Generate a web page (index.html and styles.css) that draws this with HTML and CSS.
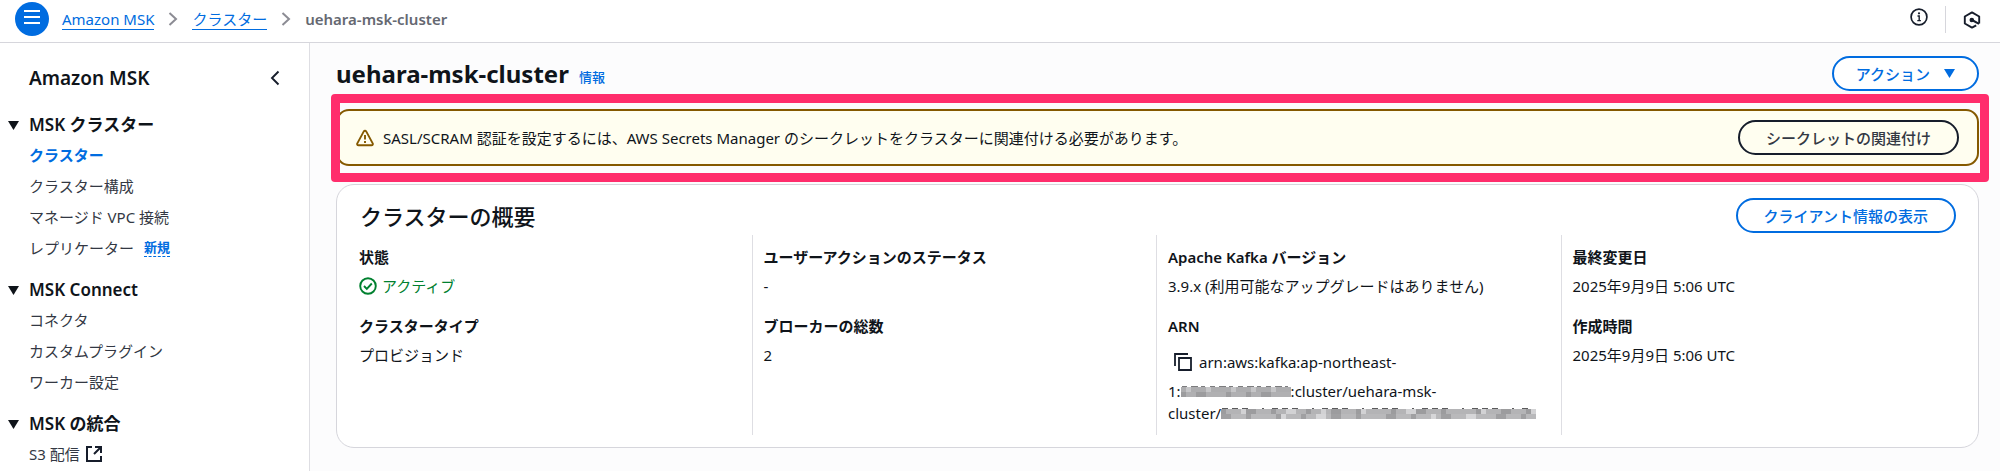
FILE: index.html
```html
<!DOCTYPE html>
<html lang="ja">
<head>
<meta charset="utf-8">
<meta name="viewport" content="width=device-width, initial-scale=1">
<title>uehara-msk-cluster</title>
<link rel="stylesheet" href="styles.css">
</head>
<body>
<header class="topbar">
  <button class="menu-button" type="button" aria-label="メニュー">
    <svg width="18" height="18" viewBox="0 0 18 18"><path d="M1 3h16M1 9h16M1 15h16" stroke="#fff" stroke-width="2" fill="none"/></svg>
  </button>
  <nav class="breadcrumbs" aria-label="パンくず">
    <a class="crumb-link" href="#">Amazon MSK</a>
    <svg class="crumb-sep" width="10" height="14" viewBox="0 0 10 14"><path d="M1.500 1l6.500 6-6.500 6" fill="none" stroke="#8c8c94" stroke-width="2"/></svg>
    <a class="crumb-link" href="#">クラスター</a>
    <svg class="crumb-sep" width="10" height="14" viewBox="0 0 10 14"><path d="M1.500 1l6.500 6-6.500 6" fill="none" stroke="#8c8c94" stroke-width="2"/></svg>
    <span class="crumb-current">uehara-msk-cluster</span>
  </nav>
  <div class="tools">
    <button class="icon-button info-button" type="button" aria-label="情報">
      <svg width="18" height="18" viewBox="0 0 18 18"><circle cx="9" cy="9" r="7.900" fill="none" stroke="#161d2b" stroke-width="1.700"/><path d="M7.500 8h1.700v4.600M7.300 12.600h3.600" fill="none" stroke="#161d2b" stroke-width="1.400"/><circle cx="9" cy="5.300" r="1.100" fill="#161d2b"/></svg>
    </button>
    <button class="icon-button hex-button" type="button" aria-label="ツール">
      <svg width="18" height="18" viewBox="0 0 18 18"><path d="M16.200 12.500v-7L9 1.400 1.800 5.500v7L9 16.600l4.200-2.300" fill="none" stroke="#161d2b" stroke-width="1.900" stroke-linejoin="round"/><path d="M9 9l7 3.800" stroke="#161d2b" stroke-width="2"/><circle cx="8.800" cy="9" r="2.300" fill="#161d2b"/></svg>
    </button>
  </div>
</header>
<div class="layout">
  <aside class="sidebar">
    <div class="side-head">
      <h2 class="side-title">Amazon MSK</h2>
      <button class="icon-button" type="button" aria-label="閉じる">
        <svg width="10" height="16" viewBox="0 0 10 16"><path d="M8.500 1.500L2 8l6.500 6.500" fill="none" stroke="#161d2b" stroke-width="1.900"/></svg>
      </button>
    </div>
    <section class="side-group">
      <h3 class="side-section"><svg class="caret" viewBox="0 0 11 9"><path d="M0 0h11L5.500 9z"/></svg>MSK クラスター</h3>
      <ul class="side-list">
        <li><a class="side-link active" href="#">クラスター</a></li>
        <li><a class="side-link" href="#">クラスター構成</a></li>
        <li><a class="side-link" href="#">マネージド VPC 接続</a></li>
        <li><a class="side-link" href="#">レプリケーター</a><button class="new-badge" type="button">新規</button></li>
      </ul>
    </section>
    <section class="side-group">
      <h3 class="side-section"><svg class="caret" viewBox="0 0 11 9"><path d="M0 0h11L5.500 9z"/></svg>MSK Connect</h3>
      <ul class="side-list">
        <li><a class="side-link" href="#">コネクタ</a></li>
        <li><a class="side-link" href="#">カスタムプラグイン</a></li>
        <li><a class="side-link" href="#">ワーカー設定</a></li>
      </ul>
    </section>
    <section class="side-group">
      <h3 class="side-section"><svg class="caret" viewBox="0 0 11 9"><path d="M0 0h11L5.500 9z"/></svg>MSK の統合</h3>
      <ul class="side-list">
        <li><a class="side-link external" href="#">S3 配信
          <svg width="16" height="16" viewBox="0 0 16 16"><path d="M6 1H1v14h14v-5M9 1h6v6M15 1L8 8" fill="none" stroke="#161d2b" stroke-width="2"/></svg></a></li>
      </ul>
    </section>
  </aside>
  <main class="content">
    <div class="page-head">
      <h1 class="page-title">uehara-msk-cluster</h1>
      <a class="info-link" href="#">情報</a>
      <button class="btn action-btn" type="button">アクション<svg class="caret" viewBox="0 0 11 9"><path d="M0 0h11L5.500 9z"/></svg></button>
    </div>
    <div class="highlight">
      <div class="alert" role="alert">
        <svg width="18" height="18" viewBox="0 0 18 18"><path d="M9 1.700c.5 0 .9.200 1.200.700l6.500 12c.5 1-.1 1.900-1.200 1.900h-13c-1.100 0-1.700-.9-1.200-1.900l6.500-12c.3-.5.700-.7 1.200-.7z" fill="none" stroke="#855900" stroke-width="1.900"/><path d="M9 6v4.500M9 12v2" stroke="#855900" stroke-width="1.900"/></svg>
        <p class="alert-text">SASL/SCRAM 認証を設定するには、AWS Secrets Manager のシークレットをクラスターに関連付ける必要があります。</p>
        <button class="btn wide-btn dark-btn" type="button">シークレットの関連付け</button>
      </div>
    </div>
    <section class="card">
      <div class="card-head">
        <h2 class="card-title">クラスターの概要</h2>
        <button class="btn wide-btn" type="button">クライアント情報の表示</button>
      </div>
      <div class="summary">
        <dl class="column">
          <div class="field"><dt>状態</dt><dd class="status"><svg width="18" height="18" viewBox="0 0 18 18"><circle cx="9" cy="9" r="7.800" fill="none" stroke="#00802f" stroke-width="1.900"/><path d="M5 9l2.800 2.800L12.800 6.500" fill="none" stroke="#00802f" stroke-width="1.900"/></svg>アクティブ</dd></div>
          <div class="field"><dt>クラスタータイプ</dt><dd>プロビジョンド</dd></div>
        </dl>
        <dl class="column">
          <div class="field"><dt>ユーザーアクションのステータス</dt><dd>-</dd></div>
          <div class="field"><dt>ブローカーの総数</dt><dd>2</dd></div>
        </dl>
        <dl class="column">
          <div class="field"><dt>Apache Kafka バージョン</dt><dd>3.9.x (利用可能なアップグレードはありません)</dd></div>
          <div class="field"><dt>ARN</dt><dd>
            <div class="arn-first"><button class="icon-button" type="button" aria-label="コピー"><svg width="18" height="18" viewBox="0 0 18 18"><path d="M1 13V1h13" fill="none" stroke="#161d2b" stroke-width="1.800"/><path d="M5 5h12v12H5z" fill="none" stroke="#161d2b" stroke-width="1.800"/></svg></button>arn:aws:kafka:ap-northeast-</div>
            <div class="arn-line">1:<svg class="mask mask-short" viewBox="0 0 110 14" preserveAspectRatio="none"><path d="M0 5.500h110" stroke="#adadaf" stroke-width="5"/><path d="M0 10.500h110" stroke="#b0b0b2" stroke-width="5"/><path d="M0 5.500h110" stroke="#c6c6c8" stroke-width="5" stroke-dasharray="0 5 5 15 5 20 5 10"/><path d="M0 10.500h110" stroke="#9c9c9e" stroke-width="5" stroke-dasharray="5 10 10 20 5 15"/><path d="M1 2.500h106" stroke="#7c7c7e" stroke-dasharray="5 4 7 3 4 5"/></svg>:cluster/uehara-msk-</div>
            <div class="arn-line">cluster/<svg class="mask mask-long" viewBox="0 0 315 14" preserveAspectRatio="none"><path d="M0 5.500h315" stroke="#b4b4b6" stroke-width="5"/><path d="M0 10.500h315" stroke="#b9b9bb" stroke-width="5"/><path d="M0 5.500h315" stroke="#d2d2d4" stroke-width="5" stroke-dasharray="0 20 5 40 10 25 5 15"/><path d="M0 5.500h315" stroke="#9c9c9e" stroke-width="5" stroke-dasharray="5 20 10 15 5 30"/><path d="M0 10.500h315" stroke="#a0a0a2" stroke-width="5" stroke-dasharray="10 15 5 25"/><path d="M0 10.500h315" stroke="#d6d6d8" stroke-width="5" stroke-dasharray="0 60 5 30 10 45"/><path d="M1 2.500h310" stroke="#5a5a5c" stroke-dasharray="6 4 6 4 6 14 2 8"/></svg></div>
          </dd></div>
        </dl>
        <dl class="column">
          <div class="field"><dt>最終変更日</dt><dd>2025年9月9日 5:06 UTC</dd></div>
          <div class="field"><dt>作成時間</dt><dd>2025年9月9日 5:06 UTC</dd></div>
        </dl>
      </div>
    </section>
  </main>
</div>
</body>
</html>
```
FILE: styles.css
```css
* { box-sizing: border-box; }
body {
  margin: 0;
  min-height: 100vh;
  display: flex;
  flex-direction: column;
  background: #fcfcfd;
  color: #0f141a;
  font: 15px/22px "Noto Sans", "Noto Sans CJK JP", sans-serif;
}
h1, h2, h3, p, ul, dl, dd { margin: 0; padding: 0; }
ul { list-style: none; }
svg { flex: none; display: block; }
button { font: inherit; cursor: pointer; }
a { color: #006ce0; text-decoration: none; }

.topbar {
  display: flex;
  align-items: center;
  height: 43px;
  padding: 0 19px 4px 15px;
  background: #fff;
  border-bottom: 1px solid #d6d6dc;
}
.menu-button {
  width: 34px;
  height: 34px;
  display: grid;
  place-items: center;
  padding: 0 0 5px;
  border: 0;
  border-radius: 50%;
  background: #006ce0;
}
.breadcrumbs {
  display: flex;
  align-items: center;
  gap: 14px;
  margin-left: 13px;
}
.crumb-link { line-height: 20px; border-bottom: 1px solid #006ce0; }
.crumb-current { color: #656871; font-weight: 600; }
.tools { display: flex; align-items: center; margin-left: auto; }
.icon-button { padding: 0; border: 0; background: none; }
.info-button { padding: 0 17px 4px 0; }
.hex-button { padding: 5px 0 4px 17px; border-left: 1px solid #d6d6dc; }

.layout { flex: 1; display: flex; }
.sidebar {
  flex: none;
  width: 310px;
  padding: 24px 29px 0 8px;
  background: #fff;
  border-right: 1px solid #dedee3;
}
.side-head {
  display: flex;
  align-items: center;
  justify-content: space-between;
  padding-left: 21px;
}
.side-title { font-size: 19px; line-height: 22px; font-weight: 600; }
.side-group { padding-top: 22px; }
.side-group + .side-group { padding-top: 13px; }
.side-section {
  display: flex;
  align-items: center;
  gap: 10px;
  font-size: 17px;
  line-height: 28px;
  font-weight: 600;
}
.caret { width: 11px; height: 9px; fill: currentColor; }
.side-list { padding-left: 21px; }
.side-list li {
  display: flex;
  align-items: center;
  gap: 10px;
  height: 31px;
}
.side-link { color: #333843; }
.side-link.active { color: #006ce0; font-weight: 600; }
.side-link.external { display: flex; align-items: center; gap: 6px; }
.new-badge {
  padding: 0;
  border: 0;
  border-bottom: 1px dashed #006ce0;
  background: none;
  color: #006ce0;
  font-size: 13px;
  line-height: 18px;
  font-weight: 700;
}

.content { flex: 1; min-width: 0; padding: 13px 21px 20px 26px; }
.page-head {
  display: flex;
  align-items: center;
  gap: 10px;
}
.page-title { font-size: 24px; line-height: 35px; font-weight: 700; }
.info-link { font-size: 13px; padding-top: 6px; font-weight: 500; }
.btn {
  height: 35px;
  padding: 0 22px;
  border: 2px solid #006ce0;
  border-radius: 18px;
  background: #fff;
  color: #006ce0;
  font-weight: 500;
}
.wide-btn { padding: 0 26px; }
.action-btn {
  display: flex;
  align-items: center;
  gap: 14px;
  margin-left: auto;
}
.dark-btn { border-color: #161d2b; background: transparent; color: #333843; }

.highlight { position: relative; padding: 18px 0; }
.highlight::after {
  content: "";
  position: absolute;
  inset: 3px -10px 2px -5px;
  border: 9px solid #ff2d6c;
  border-radius: 4px;
}
.alert {
  display: flex;
  align-items: center;
  gap: 9px;
  min-height: 57px;
  padding: 0 18px;
  border: 2px solid #855900;
  border-radius: 13px;
  background: #fffef0;
}
.alert .btn { margin-left: auto; position: relative; z-index: 1; }

.card {
  border: 1px solid #d6d6dc;
  border-radius: 18px;
  background: #fff;
  padding: 13px 10px 12px;
}
.card-head {
  display: flex;
  align-items: center;
  justify-content: space-between;
  padding: 0 12px 0 13px;
}
.card-title { font-size: 22px; line-height: 34px; font-weight: 500; }
.summary {
  display: grid;
  grid-template-columns: repeat(4, 1fr);
  padding: 2px 3px 0 0;
}
.column {
  display: flex;
  flex-direction: column;
  gap: 18px;
  padding: 11px;
  border-left: 1px solid #dedee3;
}
.column:first-child { border-color: transparent; }
.field { display: grid; gap: 7px; }
dt { font-weight: 600; }
.status { display: flex; align-items: center; gap: 5px; color: #00802f; }
.arn-first { display: flex; align-items: center; gap: 7px; height: 36px; padding-left: 6px; }
.arn-line { display: flex; align-items: center; white-space: nowrap; }
.mask { height: 14px; }
.mask-short { width: 110px; }
.mask-long { width: 315px; }
```
